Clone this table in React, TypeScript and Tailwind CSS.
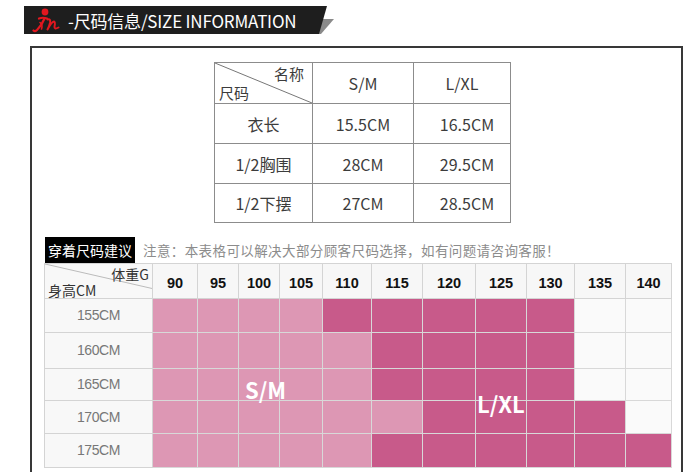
import React from 'react';

type Tone = 'L' | 'D' | 'W';

const weights = ['90', '95', '100', '105', '110', '115', '120', '125', '130', '135', '140'];
const colWidths = ['w-[45px]', 'w-[41px]', 'w-[41px]', 'w-[43px]', 'w-[49px]', 'w-[51px]', 'w-[53px]', 'w-[51px]', 'w-[48px]', 'w-[51px]', 'w-[46px]'];

const tone: Record<Tone, string> = {
  L: 'bg-[#dd97b4]',
  D: 'bg-[#c85a8a]',
  W: 'bg-[#fafafa]',
};

const rows: { label: string; h: string; cells: Tone[] }[] = [
  { label: '155CM', h: 'h-[34px]', cells: ['L', 'L', 'L', 'L', 'D', 'D', 'D', 'D', 'D', 'W', 'W'] },
  { label: '160CM', h: 'h-[36px]', cells: ['L', 'L', 'L', 'L', 'L', 'D', 'D', 'D', 'D', 'W', 'W'] },
  { label: '165CM', h: 'h-[32px]', cells: ['L', 'L', 'L', 'L', 'L', 'D', 'D', 'D', 'D', 'W', 'W'] },
  { label: '170CM', h: 'h-[33px]', cells: ['L', 'L', 'L', 'L', 'L', 'L', 'D', 'D', 'D', 'D', 'W'] },
  { label: '175CM', h: 'h-[34px]', cells: ['L', 'L', 'L', 'L', 'L', 'D', 'D', 'D', 'D', 'D', 'D'] },
];

const sizeRows = [
  { name: '衣长', sm: '15.5CM', lxl: '16.5CM', h: 'h-[40px]' },
  { name: '1/2胸围', sm: '28CM', lxl: '29.5CM', h: 'h-[40px]' },
  { name: '1/2下摆', sm: '27CM', lxl: '28.5CM', h: 'h-[39px]' },
];

function Logo() {
  return (
    <svg width="28" height="26" viewBox="0 0 28 26" className="shrink-0">
      <circle cx="13" cy="5" r="3.4" fill="#e3171f" />
      <path d="M7 11.5 Q11 10 15 11.5" stroke="#e3171f" strokeWidth="2.2" fill="none" strokeLinecap="round" />
      <path d="M12.5 11.5 Q10 18 5 23 Q3 25 1.5 23.5" stroke="#e3171f" strokeWidth="2.2" fill="none" strokeLinecap="round" />
      <path d="M8 15.5 Q11 18 9.5 22" stroke="#e3171f" strokeWidth="1.6" fill="none" strokeLinecap="round" />
      <path d="M15.5 12.5 Q19 11.5 18 16 Q17 20 15.5 22.5 Q19.5 15 22 14.5 Q23.5 15 22.5 19.5 Q22 23 26.5 20.5" stroke="#e3171f" strokeWidth="2" fill="none" strokeLinecap="round" strokeLinejoin="round" />
    </svg>
  );
}

function Header() {
  return (
    <div className="relative ml-[24px] mt-[6px] h-[28px] w-[315px]">
      <svg className="absolute left-0 top-0" width="315" height="28" viewBox="0 0 315 28">
        <polygon points="298,13 310,13 297,28 289,28" fill="#8a8a8a" />
        <polygon points="0,0 303,0 295,28 0,28" fill="#1e1e1e" />
      </svg>
      <div className="relative flex h-full items-center pl-[8px]">
        <Logo />
        <span className="ml-[8px] text-[17px] leading-none tracking-[-0.2px] text-white">-尺码信息/SIZE INFORMATION</span>
      </div>
    </div>
  );
}

function SizeTable() {
  return (
    <table className="ml-[182px] w-[296px] table-fixed border-collapse text-[16px] text-[#3c3c3c]">
      <tbody>
        <tr className="h-[41px]">
          <td className="relative w-[98px] border border-[#8c8c8c] p-0">
            <svg className="absolute inset-0 h-full w-full" preserveAspectRatio="none" viewBox="0 0 100 100">
              <line x1="0" y1="0" x2="100" y2="100" stroke="#777" strokeWidth="1" vectorEffect="non-scaling-stroke" />
            </svg>
            <div className="relative flex h-full flex-col justify-between px-[4px] py-[1px] text-[15px] leading-[19px]">
              <span className="self-end pr-[4px]">名称</span>
              <span className="self-start">尺码</span>
            </div>
          </td>
          <td className="w-[101px] border border-[#8c8c8c] text-center">S/M</td>
          <td className="w-[97px] border border-[#8c8c8c] text-center">L/XL</td>
        </tr>
        {sizeRows.map((r) => (
          <tr key={r.name} className={r.h}>
            <td className="border border-[#8c8c8c] text-center">{r.name}</td>
            <td className="border border-[#8c8c8c] text-center">{r.sm}</td>
            <td className="border border-[#8c8c8c] pl-[10px] text-center">{r.lxl}</td>
          </tr>
        ))}
      </tbody>
    </table>
  );
}

function FitGrid() {
  return (
    <div className="relative w-[627px]">
      <table className="w-[627px] table-fixed border-collapse font-['Liberation_Sans',Arial,sans-serif]">
        <tbody>
          <tr className="h-[34px]">
            <td className="relative w-[108px] border border-[#d4d4d4] bg-[#f8f8f8] p-0">
              <svg className="absolute inset-0 h-full w-full" preserveAspectRatio="none" viewBox="0 0 100 100">
                <line x1="0" y1="0" x2="100" y2="72" stroke="#bbb" strokeWidth="1" vectorEffect="non-scaling-stroke" />
              </svg>
              <div className="relative flex h-full flex-col justify-between px-[3px] pt-[2px] font-['Noto_Sans_CJK_SC',sans-serif] text-[14px] leading-[16px] text-[#333]">
                <span className="self-end">体重G</span>
                <span className="self-start">身高CM</span>
              </div>
            </td>
            {weights.map((w, i) => (
              <td key={w} className={`${colWidths[i]} border border-[#d4d4d4] bg-[#f7f7f7] pt-[5px] text-center text-[14.5px] font-bold text-[#111]`}>
                {w}
              </td>
            ))}
          </tr>
          {rows.map((r) => (
            <tr key={r.label} className={r.h}>
              <td className="border border-[#d4d4d4] bg-[#f8f8f8] text-center text-[14px] tracking-[-0.4px] text-[#777]">{r.label}</td>
              {r.cells.map((c, i) => (
                <td key={i} className={`border border-[#d8d8d8] ${tone[c]}`} />
              ))}
            </tr>
          ))}
        </tbody>
      </table>
      <span className="absolute left-[201px] top-[113px] text-[22px] font-bold leading-[26px] text-white">S/M</span>
      <span className="absolute left-[433px] top-[127px] text-[22px] font-bold leading-[26px] text-white">L/XL</span>
    </div>
  );
}

export default function App() {
  return (
    <div className="h-[472px] w-[700px] overflow-hidden bg-white font-['Noto_Sans_CJK_SC','Noto_Sans',sans-serif]">
      <Header />
      <div className="ml-[30px] mt-[12px] h-[440px] w-[653px] border-2 border-b-0 border-[#383838] pt-[14px]">
        <SizeTable />
        <div className="ml-[13px] mt-[14px] flex items-center">
          <div className="flex h-[26px] w-[90px] items-center justify-center bg-black text-[14px] text-white">穿着尺码建议</div>
          <div className="ml-[8px] text-[13.5px] tracking-[0.4px] text-[#8c8c8c]">注意：本表格可以解决大部分顾客尺码选择，如有问题请咨询客服！</div>
        </div>
        <div className="ml-[12px]">
          <FitGrid />
        </div>
      </div>
    </div>
  );
}
